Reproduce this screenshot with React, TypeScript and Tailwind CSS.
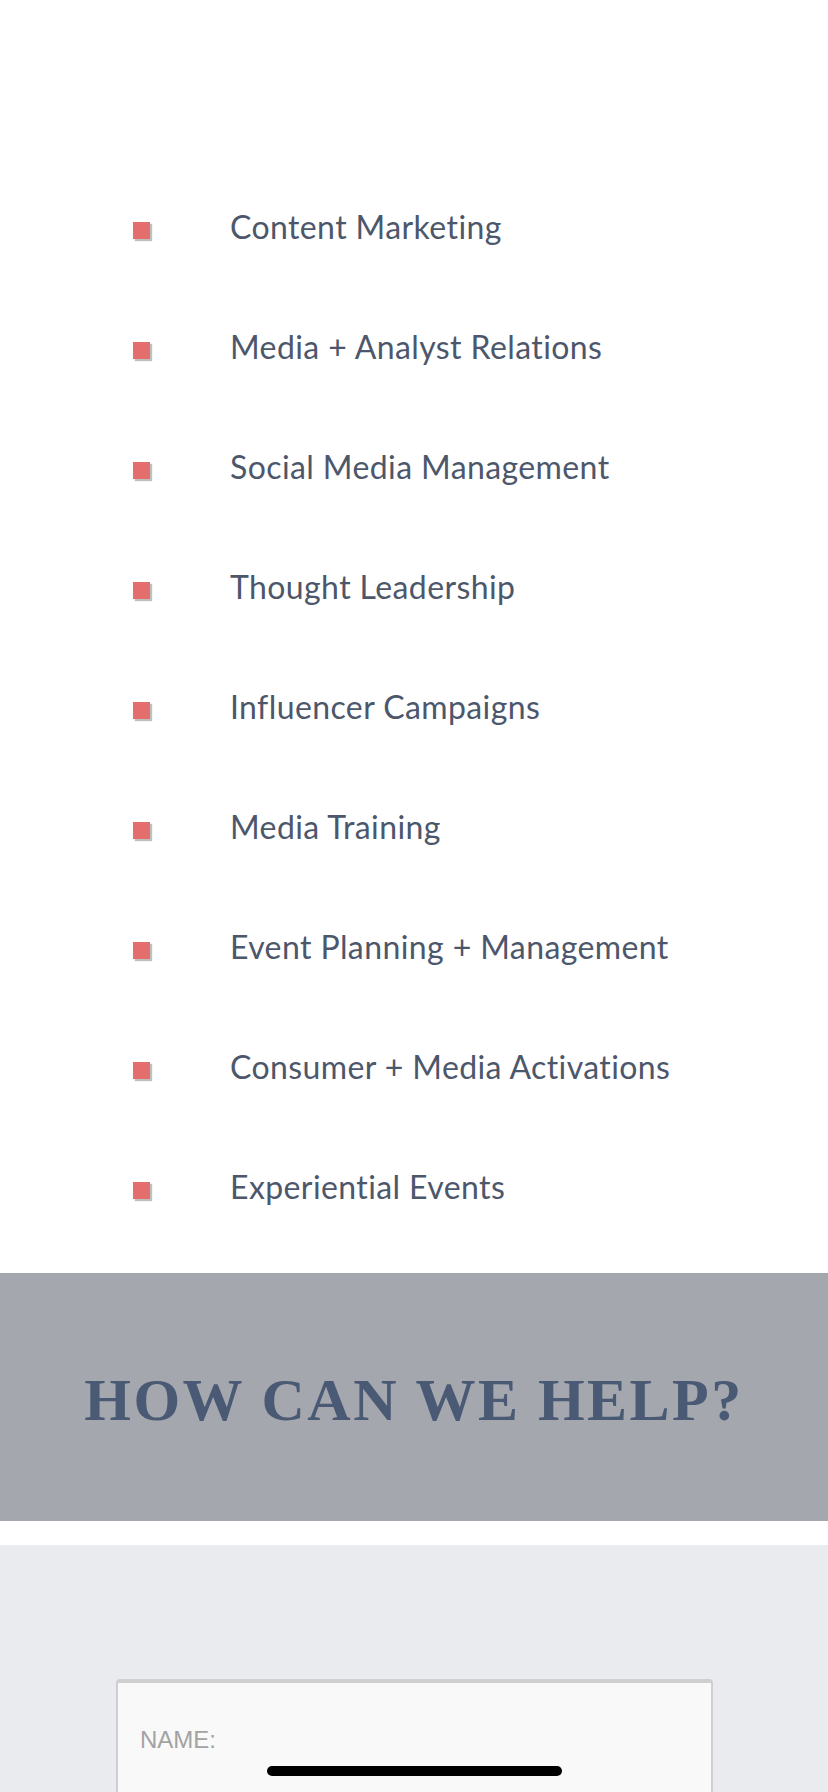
import React from "react";

const items = [
  "Content Marketing",
  "Media + Analyst Relations",
  "Social Media Management",
  "Thought Leadership",
  "Influencer Campaigns",
  "Media Training",
  "Event Planning + Management",
  "Consumer + Media Activations",
  "Experiential Events",
];

export default function App() {
  return (
    <div className="relative w-[828px] h-[1792px] overflow-hidden bg-white">
      <ul className="pt-[168px] pb-[25px]">
        {items.map((t) => (
          <li key={t} className="flex items-center h-[120px]">
            <span className="ml-[133px] mt-[5px] w-[17px] h-[17px] bg-[#e46d6d] shadow-[2px_2px_1px_rgba(0,0,0,0.25)] shrink-0" />
            <span className="ml-[80px] mb-[3px] text-[32px] leading-none tracking-[0.4px] text-[#4d576b] font-['Lato',sans-serif]">
              {t}
            </span>
          </li>
        ))}
      </ul>
      <div className="h-[248px] bg-[#a4a7ae] flex items-center justify-center">
        <h2 className="text-[60px] leading-none font-bold tracking-[2.5px] text-[#4a5a74] font-['Liberation_Serif',serif] pt-[6px]">
          HOW CAN WE HELP?
        </h2>
      </div>
      <div className="mt-[24px] bg-[#eaebee] h-[400px] pt-[134px] px-[116px]">
        <div className="w-[597px] h-[300px] bg-[#f9f9f9] border-2 border-[#cfcfcf] border-t-4 rounded-[4px] pt-[45px] pl-[22px]">
          <span className="text-[24px] leading-none text-[#a3a3a3] font-['Liberation_Sans',sans-serif]">
            NAME:
          </span>
        </div>
      </div>
      <div className="absolute left-[267px] bottom-[16px] w-[295px] h-[10px] rounded-full bg-black" />
    </div>
  );
}
